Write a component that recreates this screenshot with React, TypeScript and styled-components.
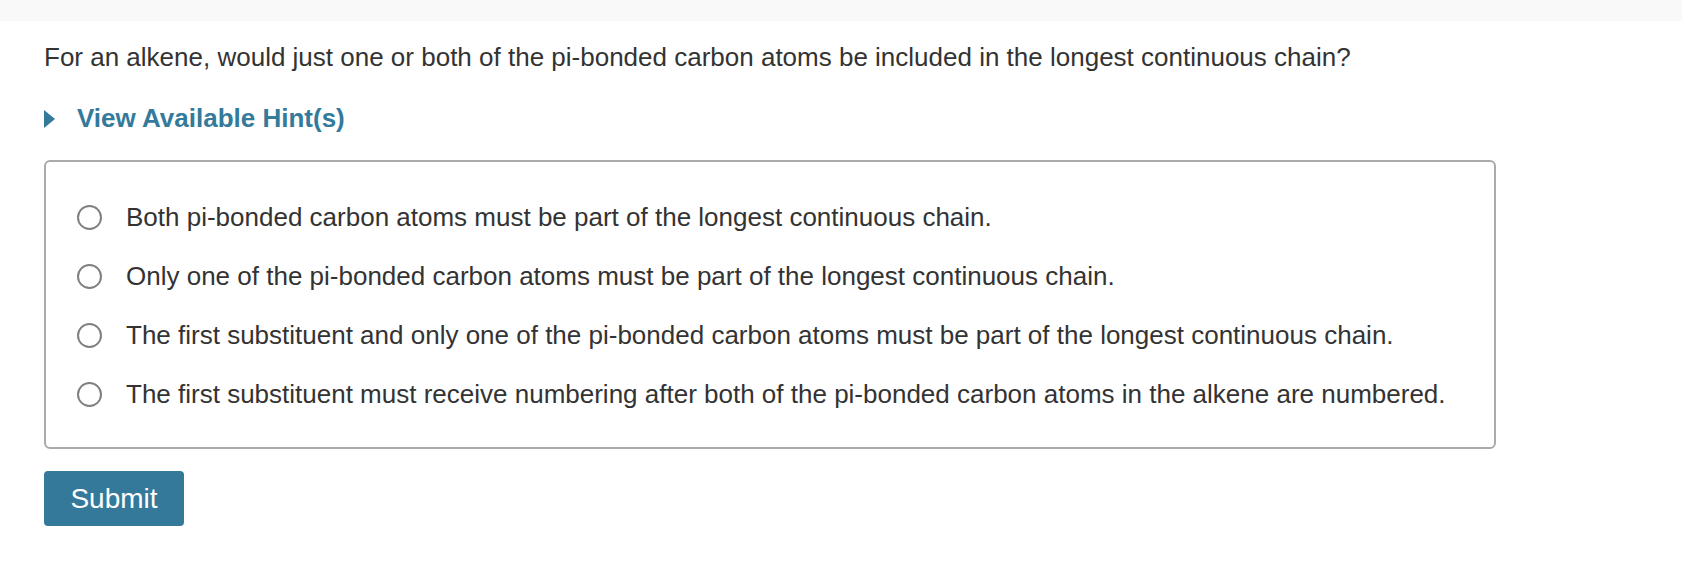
import styled, { createGlobalStyle } from "styled-components";

const GlobalStyle = createGlobalStyle`
    html, body {
        margin: 0;
        padding: 0;
        background: #ffffff;
    }
    body {
        font-family: "Liberation Sans", Arial, Helvetica, sans-serif;
        color: #333333;
    }
`;

const TopBar = styled.div`
    height: 21px;
    background-color: #f9f9f9;
`;

const Content = styled.div`
    padding: 22px 0 0 44px;
    width: 1452px;
`;

const Question = styled.p`
    margin: 0;
    font-size: 26px;
    line-height: 28px;
    color: #333333;
`;

const HintToggle = styled.button`
    margin-top: 32px;
    display: flex;
    align-items: center;
    gap: 22px;
    padding: 0;
    border: none;
    background: none;
    cursor: pointer;
    font-family: inherit;
    font-size: 26px;
    font-weight: bold;
    color: #337a9b;
`;

const Caret = styled.svg`
    width: 11px;
    height: 18px;
    fill: #337a9b;
`;

const AnswerBox = styled.div`
    margin-top: 26px;
    border: 2px solid #aaaaaa;
    border-radius: 6px;
    padding: 41px 0 39px 31px;
    display: flex;
    flex-direction: column;
    gap: 31px;
`;

const Option = styled.label`
    display: flex;
    align-items: center;
    gap: 24px;
    font-size: 26px;
    line-height: 28px;
    cursor: pointer;
`;

const Radio = styled.span`
    width: 21px;
    height: 21px;
    border: 2px solid #808080;
    border-radius: 50%;
    background: #ffffff;
    flex-shrink: 0;
`;

const SubmitButton = styled.button`
    margin-top: 22px;
    width: 140px;
    height: 55px;
    border: none;
    border-radius: 4px;
    background-color: #347999;
    color: #ffffff;
    font-family: inherit;
    font-size: 28px;
    cursor: pointer;
`;

const options = [
    "Both pi-bonded carbon atoms must be part of the longest continuous chain.",
    "Only one of the pi-bonded carbon atoms must be part of the longest continuous chain.",
    "The first substituent and only one of the pi-bonded carbon atoms must be part of the longest continuous chain.",
    "The first substituent must receive numbering after both of the pi-bonded carbon atoms in the alkene are numbered.",
];

const App = () => {
    return (
        <>
            <GlobalStyle />
            <TopBar />
            <Content>
                <Question>
                    For an alkene, would just one or both of the pi-bonded carbon atoms be included in the longest continuous chain?
                </Question>
                <HintToggle>
                    <Caret viewBox="0 0 11 18">
                        <path d="M0 0 L11 9 L0 18 Z" />
                    </Caret>
                    View Available Hint(s)
                </HintToggle>
                <AnswerBox>
                    {options.map((text) => (
                        <Option key={text}>
                            <Radio />
                            {text}
                        </Option>
                    ))}
                </AnswerBox>
                <SubmitButton>Submit</SubmitButton>
            </Content>
        </>
    );
};

export default App;
